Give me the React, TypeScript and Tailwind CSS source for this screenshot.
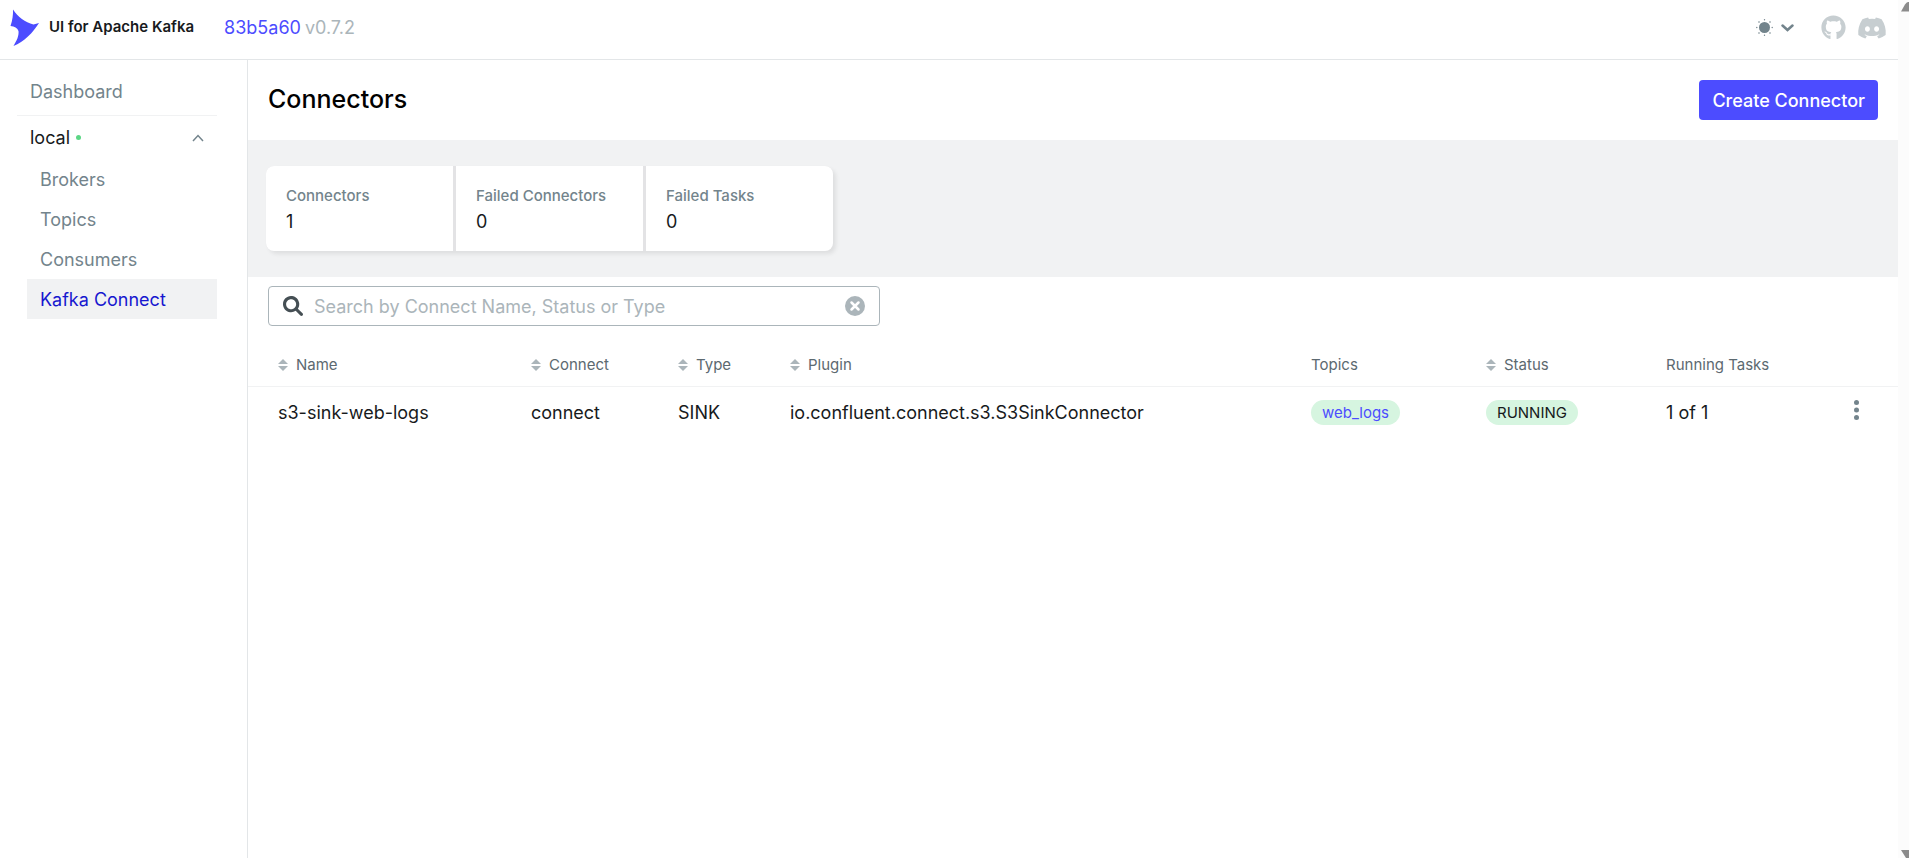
import { FaGithub, FaDiscord } from "react-icons/fa";

const menu = ["Brokers", "Topics", "Consumers", "Kafka Connect"];

const metrics = [
  { label: "Connectors", value: 1 },
  { label: "Failed Connectors", value: 0 },
  { label: "Failed Tasks", value: 0 },
];

const columns = [
  { title: "Name", sortable: true, width: "w-[253px]" },
  { title: "Connect", sortable: true, width: "w-[147px]" },
  { title: "Type", sortable: true, width: "w-[112px]" },
  { title: "Plugin", sortable: true, width: "" },
  { title: "Topics", sortable: false, width: "w-[175px]" },
  { title: "Status", sortable: true, width: "w-[180px]" },
  { title: "Running Tasks", sortable: false, width: "w-[160px]" },
];

const connectors = [
  {
    name: "s3-sink-web-logs",
    connect: "connect",
    type: "SINK",
    plugin: "io.confluent.connect.s3.S3SinkConnector",
    topics: ["web_logs"],
    status: "RUNNING",
    tasks: "1 of 1",
  },
];

function Logo() {
  return (
    <svg width="30" height="38" viewBox="0 0 30 38" fill="#4c4cff">
      <path d="M3 0.500C8 8 15 13 23.500 15.500L29 14C23 23.500 14 33 3.500 37C7 31 9 27 8.500 22C7.500 19 4.500 17.500 0.500 17C2.500 11 3.200 6 3 0.500Z" />
    </svg>
  );
}

function SunIcon() {
  return (
    <svg width="17" height="17" viewBox="0 0 17 17" fill="#73848c">
      <circle cx="8.500" cy="8.500" r="5.500" />
      <circle cx="8.500" cy="0.800" r="0.700" />
      <circle cx="8.500" cy="16.200" r="0.700" />
      <circle cx="0.800" cy="8.500" r="0.700" />
      <circle cx="16.200" cy="8.500" r="0.700" />
      <circle cx="3" cy="3" r="0.800" />
      <circle cx="14" cy="3" r="0.800" />
      <circle cx="3" cy="14" r="0.800" />
      <circle cx="14" cy="14" r="0.800" />
    </svg>
  );
}

function SortIcon() {
  return (
    <svg width="10" height="12" viewBox="0 0 10 12" fill="#abb5ba">
      <path d="M5 0L10 5H0Z" />
      <path d="M5 12L0 7H10Z" />
    </svg>
  );
}

function Header() {
  return (
    <header className="flex h-[60px] items-center justify-between border-b border-[#e3e6e8] pr-[11px] pb-1 pl-[10px]">
      <div className="flex items-center">
        <a href="#" className="flex items-center gap-[9px]">
          <Logo />
          <span className="text-[15px] font-semibold text-[#171a1c]">
            UI for Apache Kafka
          </span>
        </a>
        <div className="ml-[30px] flex gap-1 text-[18px] text-[#abb5ba]">
          <a href="#" className="text-[#4c4cff]">
            83b5a60
          </a>
          <span>v0.7.2</span>
        </div>
      </div>
      <div className="flex items-center">
        <button
          type="button"
          aria-label="Theme"
          className="mr-[27px] flex items-center gap-2"
        >
          <SunIcon />
          <svg width="13" height="8" viewBox="0 0 13 8" fill="none">
            <path
              d="M1.500 1.500L6.500 6L11.500 1.500"
              stroke="#73848c"
              strokeWidth="2.500"
              strokeLinecap="round"
            />
          </svg>
        </button>
        <a href="#" aria-label="GitHub" className="mr-[11px]">
          <FaGithub className="size-[25px] text-[#c7ced1]" />
        </a>
        <a href="#" aria-label="Discord">
          <FaDiscord className="size-[30px] text-[#c7ced1]" />
        </a>
      </div>
    </header>
  );
}

function Sidebar() {
  return (
    <aside className="w-[248px] shrink-0 border-r border-[#e3e6e8] pt-3 pr-[30px] pl-[17px]">
      <nav className="text-[18px] text-[#73848c]">
        <a
          href="#"
          className="flex h-11 items-center border-b border-[#f1f2f3] pb-1 pl-[13px]"
        >
          Dashboard
        </a>
        <button
          type="button"
          className="flex h-[43px] w-full items-center pr-[13px] pl-[13px] text-[#171a1c]"
        >
          local
          <span className="ml-[6px] size-[5px] rounded-full bg-[#5cd685]" />
          <svg
            className="ml-auto"
            width="12"
            height="8"
            viewBox="0 0 12 8"
            fill="none"
          >
            <path d="M1 7L6 1.500L11 7" stroke="#73848c" strokeWidth="1.500" />
          </svg>
        </button>
        <ul className="pl-[10px]">
          {menu.map((item) => (
            <li key={item}>
              <a
                href="#"
                className={
                  item === "Kafka Connect"
                    ? "flex h-10 items-center bg-[#f1f2f3] pl-[13px] text-[#1717cf]"
                    : "flex h-10 items-center pl-[13px]"
                }
              >
                {item}
              </a>
            </li>
          ))}
        </ul>
      </nav>
    </aside>
  );
}

function Metrics() {
  return (
    <section className="bg-[#f1f2f3] px-[18px] pt-[26px] pb-[26px]">
      <dl className="flex w-fit gap-[3px] overflow-hidden rounded-lg bg-[#e3e3e5] shadow-[3px_3px_4px_rgba(0,0,0,0.08)]">
        {metrics.map((metric) => (
          <div
            key={metric.label}
            className="h-[85px] w-[187px] bg-white px-5 pt-5"
          >
            <dt className="text-[15px] leading-5 font-medium text-[#73848c]">
              {metric.label}
            </dt>
            <dd className="text-[18px] leading-8 text-[#171a1c]">
              {metric.value}
            </dd>
          </div>
        ))}
      </dl>
    </section>
  );
}

function Search() {
  return (
    <div className="mt-[9px] ml-5 flex h-10 w-[612px] items-center rounded border border-[#abb5ba] pr-[14px] pl-[14px]">
      <svg width="20" height="20" viewBox="0 0 512 512" fill="#454f54">
        <path d="M500.300 443.700l-119.700-119.700c27.200-40.400 40.200-90.900 33.200-144.200C401.800 87.800 326.800 13.300 235.200 1.700 97.900-15.700-15.700 97.900 1.700 235.200c11.600 91.600 86.100 166.600 178.100 178.600 53.300 7 103.800-6 144.200-33.200l119.700 119.700c15.600 15.600 41 15.600 56.600 0s15.600-41 0-56.600zM80 208c0-70.700 57.300-128 128-128s128 57.300 128 128-57.300 128-128 128S80 278.700 80 208z" />
      </svg>
      <input
        type="text"
        aria-label="Search"
        placeholder="Search by Connect Name, Status or Type"
        className="ml-[11px] min-w-0 flex-1 text-[18px] outline-none placeholder:text-[#abb5ba]"
      />
      <button type="button" aria-label="Clear">
        <svg width="20" height="20" viewBox="0 0 20 20" fill="none">
          <circle cx="10" cy="10" r="10" fill="#abb5ba" />
          <path
            d="M6.500 6.500L13.500 13.500M13.500 6.500L6.500 13.500"
            stroke="#fff"
            strokeWidth="2.500"
            strokeLinecap="round"
          />
        </svg>
      </button>
    </div>
  );
}

function ConnectorsTable() {
  return (
    <table className="mt-[13px] w-full table-fixed text-left">
      <thead>
        <tr className="h-[47px] border-b border-[#f1f2f3] text-[15px] text-[#5c6970]">
          {columns.map((col) => (
            <th
              key={col.title}
              className={`${col.width} pt-[6px] pl-[30px] font-normal`}
            >
              {col.sortable ? (
                <button type="button" className="flex items-center gap-2">
                  <SortIcon />
                  {col.title}
                </button>
              ) : (
                col.title
              )}
            </th>
          ))}
          <th className="w-[102px]" />
        </tr>
      </thead>
      <tbody>
        {connectors.map((row) => (
          <tr key={row.name} className="h-[52px] text-[18px] text-[#171a1c]">
            <td className="pl-[30px]">{row.name}</td>
            <td className="pl-[30px]">{row.connect}</td>
            <td className="pl-[30px]">{row.type}</td>
            <td className="pl-[30px]">{row.plugin}</td>
            <td className="pl-[30px]">
              <div className="flex">
                {row.topics.map((topic) => (
                  <a
                    key={topic}
                    href="#"
                    className="rounded-full bg-[#d6f5e0] px-[11px] text-[15px] leading-[25px] text-[#4c4cff]"
                  >
                    {topic}
                  </a>
                ))}
              </div>
            </td>
            <td className="pl-[30px]">
              <div className="flex">
                <span className="rounded-full bg-[#d6f5e0] px-[11px] text-[15px] leading-[25px]">
                  {row.status}
                </span>
              </div>
            </td>
            <td className="pl-[30px]">{row.tasks}</td>
            <td className="pb-1 pl-[58px]">
              <button type="button" aria-label="Actions" className="block">
                <svg width="5" height="20" viewBox="0 0 5 20" fill="#73848c">
                  <circle cx="2.500" cy="2.500" r="2.500" />
                  <circle cx="2.500" cy="10" r="2.500" />
                  <circle cx="2.500" cy="17.500" r="2.500" />
                </svg>
              </button>
            </td>
          </tr>
        ))}
      </tbody>
    </table>
  );
}

function Scrollbar() {
  return (
    <div
      aria-hidden="true"
      className="flex w-[11px] shrink-0 flex-col justify-between bg-[#fcfcfc]"
    >
      <svg
        className="mt-[2px]"
        width="11"
        height="10"
        viewBox="0 0 11 10"
        fill="#8b8b8b"
      >
        <path d="M3 9.500L7 2.500Q8.500 0 10 0H11V9.500Z" />
      </svg>
      <svg width="11" height="8" viewBox="0 0 11 8" fill="#8b8b8b">
        <path d="M3 0H11V8H8Z" />
      </svg>
    </div>
  );
}

export default function App() {
  return (
    <div className="flex min-h-screen bg-white font-['Inter',sans-serif]">
      <div className="flex min-w-0 flex-1 flex-col">
        <Header />
        <div className="flex flex-1">
          <Sidebar />
          <main className="min-w-0 flex-1">
            <div className="flex h-20 items-center justify-between pr-5 pl-5">
              <h1 className="text-[25px] font-medium text-black">Connectors</h1>
              <button
                type="button"
                className="h-10 rounded bg-[#4c4cff] px-[13px] text-[18px] font-medium text-white"
              >
                Create Connector
              </button>
            </div>
            <Metrics />
            <Search />
            <ConnectorsTable />
          </main>
        </div>
      </div>
      <Scrollbar />
    </div>
  );
}
